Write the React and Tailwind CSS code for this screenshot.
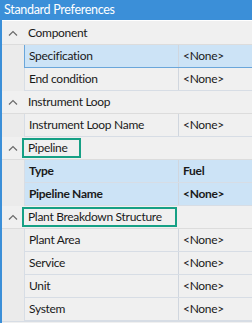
import React from "react";

const font = { fontFamily: 'Lato, "Noto Sans", sans-serif' };

function Chevron() {
  return (
    <svg width="10" height="6" viewBox="0 0 10 6" className="shrink-0">
      <polyline points="1,5.5 5,1.5 9,5.5" fill="none" stroke="#6b6b6b" strokeWidth="1.2" />
    </svg>
  );
}

const txt = "whitespace-nowrap text-[12px] tracking-[-0.3px] text-[#1a1a1a]";

function Header({ label, boxed, boxW }) {
  return (
    <div className="flex h-[23px] items-center border-b border-[#dcdcdc] bg-[#f0f0f0]">
      <div className="flex w-[20px] justify-center pl-[2px]">
        <Chevron />
      </div>
      {boxed ? (
        <div className={`flex h-[20px] items-center border-[2px] border-[#16a085] pl-[4px] ${boxW}`}>
          <span className={txt}>{label}</span>
        </div>
      ) : (
        <span className={`pl-[6px] ${txt}`}>{label}</span>
      )}
    </div>
  );
}

function Row({ name, value, selected, bold, blue }) {
  const bg = selected || blue ? "bg-[#cce3f6]" : "bg-[#f0f0f0]";
  const border = selected ? "border-[#6aa6da]" : "border-[#d7dde5]";
  return (
    <div className="flex h-[23px]">
      <div className="w-[22px] shrink-0 bg-[#ebebeb]" />
      <div className={`flex flex-1 border-b border-l ${border} ${bg}`}>
        <div className={`flex w-[154px] items-center border-r border-[#d0d6de] pl-[4px] ${bold ? "font-bold" : ""}`}>
          <span className={txt}>{name}</span>
        </div>
        <div className={`flex flex-1 items-center pl-[4px] ${bold ? "font-bold" : ""}`}>
          <span className={txt}>{value}</span>
        </div>
      </div>
    </div>
  );
}

export default function App() {
  return (
    <div className="h-[323px] w-[252px] overflow-hidden border-l-[2px] border-[#3b8fd8] bg-[#f0f0f0]" style={font}>
      <div className="flex h-[20px] items-center bg-[#3b8fd8] pl-[2px]">
        <span className="whitespace-nowrap text-[12.5px] tracking-[-0.3px] text-white">Standard Preferences</span>
      </div>
      <div className="h-[2px] border-t border-white bg-[#f0f0f0]" />
      <Header label="Component" />
      <Row name="Specification" value="<None>" selected />
      <Row name="End condition" value="<None>" />
      <Header label="Instrument Loop" />
      <Row name="Instrument Loop Name" value="<None>" />
      <Header label="Pipeline" boxed boxW="w-[59px]" />
      <Row name="Type" value="Fuel" bold blue />
      <Row name="Pipeline Name" value="<None>" bold blue />
      <Header label="Plant Breakdown Structure" boxed boxW="w-[155px]" />
      <Row name="Plant Area" value="<None>" />
      <Row name="Service" value="<None>" />
      <Row name="Unit" value="<None>" />
      <Row name="System" value="<None>" />
      <div className="border-t border-[#d7dde5]" />
    </div>
  );
}
